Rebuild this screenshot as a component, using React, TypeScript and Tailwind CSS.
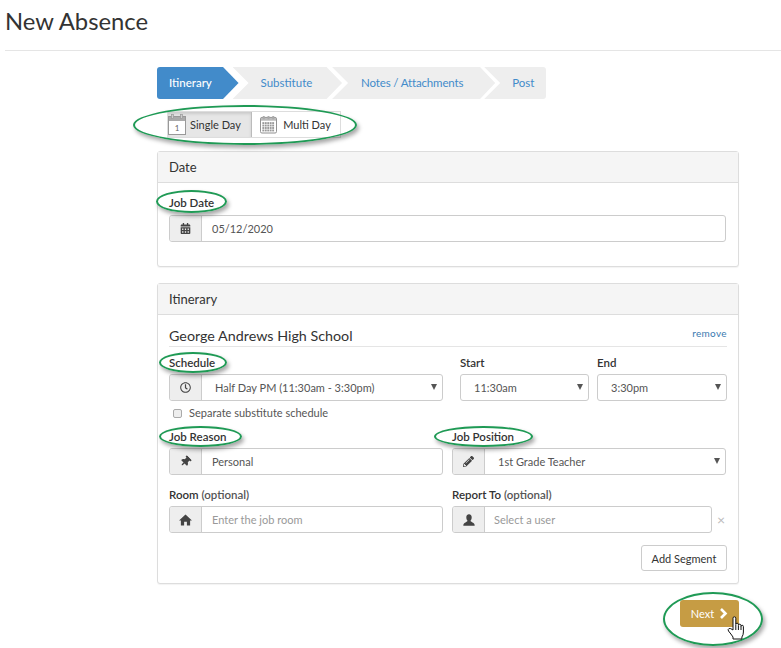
import React from "react";
import { FaCalendarAlt, FaPencilAlt, FaRegClock, FaThumbtack } from "react-icons/fa";

function Step({ label, active, className }: { label: string; active?: boolean; className: string }) {
    return (
        <div className={`h-8 flex items-center text-[11.5px] ${active ? "bg-[#428bca] text-white" : "bg-[#eeeeee] text-[#428bca]"} ${className}`}>
            {label}
        </div>
    );
}

function Addon({ children }: { children: React.ReactNode }) {
    return (
        <div className="w-8 shrink-0 flex items-center justify-center bg-[#eeeeee] border-r border-[#cccccc] text-[#444444] text-[11px]">
            {children}
        </div>
    );
}

function Field({ icon, text, muted, caret, textClass = "pl-[10px]" }: { icon?: React.ReactNode; text: string; muted?: boolean; caret?: boolean; textClass?: string }) {
    return (
        <div className="relative flex h-[27px] border border-[#cccccc] rounded-[3px] bg-white overflow-hidden">
            {icon && <Addon>{icon}</Addon>}
            <div className={`flex-1 flex items-center pt-[2px] text-[11px] ${textClass} ${muted ? "text-[#999999]" : "text-[#555555]"}`}>{text}</div>
            {caret && <div className="absolute right-[5px] top-[9px] w-0 h-0 border-x-[3.5px] border-x-transparent border-t-[6px] border-t-[#555555]" />}
        </div>
    );
}

function Label({ children, optional }: { children: React.ReactNode; optional?: boolean }) {
    return (
        <div className="h-[17px] -mt-[1px] text-[11.5px] leading-[17px] font-semibold text-[#333333]">
            {children}
            {optional && <span className="text-[#555555]"> (optional)</span>}
        </div>
    );
}

function Panel({ title, children, className }: { title: string; children: React.ReactNode; className: string }) {
    return (
        <div className={`border border-[#dddddd] rounded-[3px] shadow-[0_1px_1px_rgba(0,0,0,0.05)] bg-white ${className}`}>
            <div className="h-[31px] flex items-center pt-[2px] px-[11px] bg-[#f5f5f5] border-b border-[#dddddd] text-[13px] text-[#333333]">{title}</div>
            {children}
        </div>
    );
}

function Ring({ className }: { className: string }) {
    return <div className={`absolute rounded-[50%] border-2 border-[#1f9a55] shadow-[2px_3px_4px_rgba(0,0,0,0.35)] pointer-events-none ${className}`} />;
}

function SingleDayIcon() {
    return (
        <svg width="18" height="21" viewBox="0 0 18 21" className="shrink-0">
            <rect x="0.5" y="2.5" width="17" height="18" fill="#fff" stroke="#999" />
            <rect x="1" y="3" width="16" height="4" fill="#aaa" />
            <rect x="3.5" y="0.5" width="2" height="4" fill="#ccc" stroke="#999" strokeWidth="0.7" />
            <rect x="12.5" y="0.5" width="2" height="4" fill="#ccc" stroke="#999" strokeWidth="0.7" />
            <text x="9" y="17" fontSize="8" fill="#666" textAnchor="middle" fontFamily="Lato, sans-serif">1</text>
        </svg>
    );
}

function MultiDayIcon() {
    const cells: React.ReactNode[] = [];
    for (let r = 0; r < 4; r++) {
        for (let c = 0; c < 5; c++) {
            cells.push(<rect key={`${r}-${c}`} x={2.5 + c * 2.6} y={7 + r * 2.6} width="2" height="2" fill="#999" />);
        }
    }
    return (
        <svg width="17" height="19" viewBox="0 0 18 19" className="shrink-0">
            <rect x="0.5" y="2" width="17" height="16.5" rx="1.5" fill="#fff" stroke="#888" />
            <rect x="1" y="2.5" width="16" height="3" fill="#bbb" />
            <rect x="3" y="0.5" width="2" height="3.5" fill="#aaa" />
            <rect x="8" y="0.5" width="2" height="3.5" fill="#aaa" />
            <rect x="13" y="0.5" width="2" height="3.5" fill="#aaa" />
            {cells}
        </svg>
    );
}

function HomeIcon() {
    return (
        <svg width="13" height="12" viewBox="0 0 14 13" fill="#444444">
            <path d="M7 0.5 L14 7 H12 V12.5 H8.5 V8.5 H5.5 V12.5 H2 V7 H0 Z" />
        </svg>
    );
}

function UserIcon() {
    return (
        <svg width="12" height="12" viewBox="0 0 12 12" fill="#444444">
            <path d="M6 0.3 C7.8 0.3 8.7 1.6 8.7 3.4 C8.7 5 8 6.1 7.5 6.6 C7.5 7.4 8 7.7 9.5 8.4 C11 9 11.7 9.7 11.7 11.7 H0.3 C0.3 9.7 1 9 2.5 8.4 C4 7.7 4.5 7.4 4.5 6.6 C4 6.1 3.3 5 3.3 3.4 C3.3 1.6 4.2 0.3 6 0.3 Z" />
        </svg>
    );
}

function NextChevron() {
    return (
        <svg width="9" height="11" viewBox="0 0 9 11" fill="none" stroke="#ffffff" strokeWidth="2.6">
            <path d="M2 1 L6.5 5.5 L2 10" />
        </svg>
    );
}

function HandCursor() {
    return (
        <svg width="18" height="24" viewBox="0 0 18 24" className="absolute left-[727px] top-[616px]" fill="#ffffff" stroke="#111111" strokeWidth="1">
            <path d="M6 11 V2.2 a1.4 1.4 0 0 1 2.8 0 V8.5 a1.3 1.3 0 0 1 2.6 0 V9.5 a1.3 1.3 0 0 1 2.6 0 V10.5 a1.2 1.2 0 0 1 2.4 0 V16 q0 3 -1.5 5 V23 H6 V21 Q4 18 1.5 15 Q0.5 13.5 2 12.5 Q3.5 12 6 14 Z" />
            <path d="M8.8 9 V14 M11.4 10 V14 M14 10.5 V14" fill="none" />
        </svg>
    );
}

export default function App() {
    return (
        <div className="relative w-[781px] h-[648px] overflow-hidden bg-white font-['Lato','Open_Sans',sans-serif] text-[#333333]">
            <div className="ml-[5px] h-[51px] border-b border-[#e5e5e5]">
                <h1 className="text-[23.8px] leading-[43px] text-[#333333]">New Absence</h1>
            </div>

            <div className="ml-[157px] w-[582px] pt-4">
                <div className="flex w-[389px] h-8 rounded-[3px] overflow-hidden">
                    <Step label="Itinerary" active className="w-[82px] pl-3 font-medium [clip-path:polygon(0_0,66px_0,100%_50%,66px_100%,0_100%)]" />
                    <Step label="Substitute" className="w-[110px] -ml-[6px] pl-7 [clip-path:polygon(0_0,94px_0,100%_50%,94px_100%,0_100%,16px_50%)]" />
                    <Step label="Notes / Attachments" className="w-[164px] -ml-[10px] pl-[29px] tracking-[-0.15px] [clip-path:polygon(0_0,148px_0,100%_50%,148px_100%,0_100%,16px_50%)]" />
                    <Step label="Post" className="w-[62px] -ml-[11px] pl-[28px] [clip-path:polygon(0_0,100%_0,100%_100%,0_100%,16px_50%)]" />
                </div>

                <div className="mt-3 flex ml-[10px] w-[174px] h-[27px] border border-[#dddddd] text-[11px] text-[#333333]">
                    <div className="w-[84px] flex items-center gap-[4px] bg-[#e6e6e6] border-r border-[#bbbbbb] shadow-[inset_0_2px_3px_rgba(0,0,0,0.12)]">
                        <SingleDayIcon />
                        <span className="pt-[2px]">Single Day</span>
                    </div>
                    <div className="flex-1 flex items-center justify-center gap-[6px] pr-[1px]">
                        <MultiDayIcon />
                        <span className="pt-[2px]">Multi Day</span>
                    </div>
                </div>

                <Panel title="Date" className="mt-[13px] h-[116px]">
                    <div className="px-[11px] pt-[12px]">
                        <Label>Job Date</Label>
                        <div className="mt-[4px] mr-[1px]">
                            <Field icon={<FaCalendarAlt />} text="05/12/2020" />
                        </div>
                    </div>
                </Panel>

                <Panel title="Itinerary" className="mt-4 h-[301px]">
                    <div className="px-[11px]">
                        <div className="h-[32px] pt-[10px] flex items-center justify-between border-b border-[#e5e5e5]">
                            <span className="text-[14.3px] text-[#333333]">George Andrews High School</span>
                            <span className="text-[10px] tracking-[0.35px] text-[#3a7ab0] -mt-[4px]">remove</span>
                        </div>

                        <div className="flex mt-[8px]">
                            <div className="w-[274px] shrink-0">
                                <Label>Schedule</Label>
                                <div className="mt-[3px]">
                                    <Field icon={<FaRegClock />} text="Half Day PM (11:30am - 3:30pm)" caret textClass="pl-[13px]" />
                                </div>
                            </div>
                            <div className="w-[129px] shrink-0 ml-[17px]">
                                <Label>Start</Label>
                                <div className="mt-[3px]">
                                    <Field text="11:30am" caret textClass="pl-[13px]" />
                                </div>
                            </div>
                            <div className="w-[130px] shrink-0 ml-[8px]">
                                <Label>End</Label>
                                <div className="mt-[3px]">
                                    <Field text="3:30pm" caret textClass="pl-[13px]" />
                                </div>
                            </div>
                        </div>

                        <div className="flex items-center gap-[7px] mt-[4px] ml-1 h-[17px] text-[11px] text-[#555555]">
                            <span className="w-[9px] h-[9px] border border-[#aaaaaa] rounded-[2px] bg-[#eeeeee]" />
                            Separate substitute schedule
                        </div>

                        <div className="grid grid-cols-[274px_274px] gap-x-[9px] mt-[7px]">
                            <div>
                                <Label>Job Reason</Label>
                                <div className="mt-[3px]">
                                    <Field icon={<FaThumbtack className="rotate-45" />} text="Personal" />
                                </div>
                            </div>
                            <div>
                                <Label>Job Position</Label>
                                <div className="mt-[3px]">
                                    <Field icon={<FaPencilAlt />} text="1st Grade Teacher" caret textClass="pl-[13px]" />
                                </div>
                            </div>
                        </div>

                        <div className="grid grid-cols-[274px_274px] gap-x-[9px] mt-[12px]">
                            <div>
                                <Label optional>Room</Label>
                                <div className="mt-[3px]">
                                    <Field icon={<HomeIcon />} text="Enter the job room" muted />
                                </div>
                            </div>
                            <div>
                                <Label optional>Report To</Label>
                                <div className="flex items-center mt-[3px]">
                                    <div className="w-[260px] shrink-0">
                                        <Field icon={<UserIcon />} text="Select a user" muted textClass="pl-[9px]" />
                                    </div>
                                    <span className="ml-[5px] text-[14px] text-[#bbbbbb]">×</span>
                                </div>
                            </div>
                        </div>

                        <div className="flex justify-end mt-[12px]">
                            <div className="h-[26px] w-[86px] flex items-center justify-center pt-[2px] border border-[#cccccc] rounded-[3px] text-[11px] text-[#333333]">
                                Add Segment
                            </div>
                        </div>
                    </div>
                </Panel>

                <div className="flex justify-end mt-4">
                    <div className="h-[27px] w-[59px] flex items-center justify-center gap-[5px] rounded-[3px] bg-[#c69c44] text-[11px] text-white">
                        <span className="pt-[2px]">Next</span>
                        <NextChevron />
                    </div>
                </div>
            </div>

            {/* green callouts drawn on top of the form */}
            <Ring className="left-[133px] top-[105px] w-[224px] h-[40px]" />
            <Ring className="left-[156px] top-[190px] w-[71px] h-[23px]" />
            <Ring className="left-[159px] top-[352px] w-[68px] h-[21px]" />
            <Ring className="left-[159px] top-[426px] w-[83px] h-[21px]" />
            <Ring className="left-[434px] top-[426px] w-[99px] h-[21px]" />
            <Ring className="left-[663px] top-[592px] w-[100px] h-[54px]" />
            <HandCursor />
        </div>
    );
}
